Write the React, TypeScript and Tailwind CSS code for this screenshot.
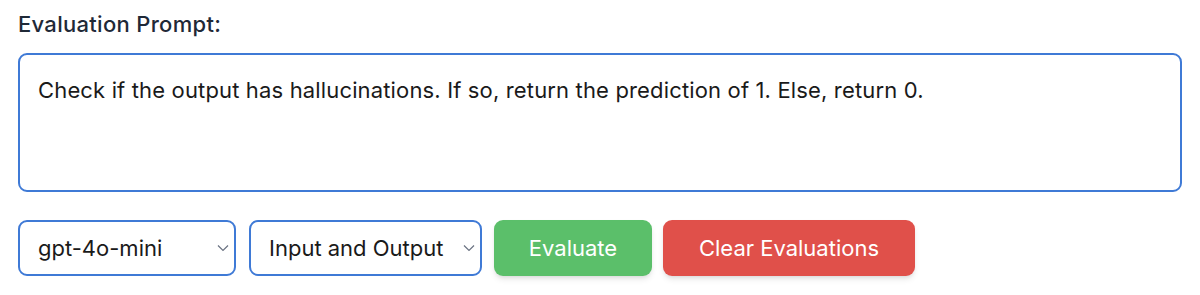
import React from 'react';

function Chevron() {
  return (
    <svg
      className="pointer-events-none absolute right-[7px] top-1/2 -translate-y-1/2 w-[12px] h-[7px] text-gray-500"
      viewBox="0 0 12 7"
      fill="none"
      stroke="currentColor"
      strokeWidth="1.2"
    >
      <path d="M1 1l5 5 5-5" />
    </svg>
  );
}

function Select({ value, options, width }: { value: string; options: string[]; width: string }) {
  return (
    <div className={`relative ${width}`}>
      <select
        defaultValue={value}
        className="appearance-none w-full h-[56px] pl-[18px] pr-8 bg-white border-2 border-[#3f7ad6] rounded-[9px] text-[22px] text-[#1a1a1a] outline-none"
      >
        {options.map((o) => (
          <option key={o}>{o}</option>
        ))}
      </select>
      <Chevron />
    </div>
  );
}

export default function App() {
  return (
    <div className="w-[1200px] h-[295px] bg-white px-[18px] pt-[9px] font-['Inter',sans-serif]">
      <h2 className="text-[22px] font-medium tracking-[0.3px] text-[#1f2937] leading-[30px] mb-[14px]">
        Evaluation Prompt:
      </h2>
      <textarea
        defaultValue="Check if the output has hallucinations. If so, return the prediction of 1. Else, return 0."
        className="block w-[1164px] h-[139px] resize-none border-2 border-[#3f7ad6] rounded-[9px] px-[18px] pt-[20px] text-[22px] leading-[30px] tracking-[0.15px] text-[#1a1a1a] outline-none"
      />
      <div className="flex items-center mt-[28px]">
        <Select value="gpt-4o-mini" options={['gpt-4o-mini', 'gpt-4o']} width="w-[218px]" />
        <div className="w-[13px]" />
        <Select
          value="Input and Output"
          options={['Input and Output', 'Input', 'Output']}
          width="w-[233px]"
        />
        <button className="ml-[12px] w-[158px] h-[56px] rounded-[9px] bg-[#5bbf6a] text-white text-[22px] shadow-md">
          Evaluate
        </button>
        <button className="ml-[11px] w-[252px] h-[56px] rounded-[9px] bg-[#e0504a] text-white text-[22px] shadow-md">
          Clear Evaluations
        </button>
      </div>
    </div>
  );
}
